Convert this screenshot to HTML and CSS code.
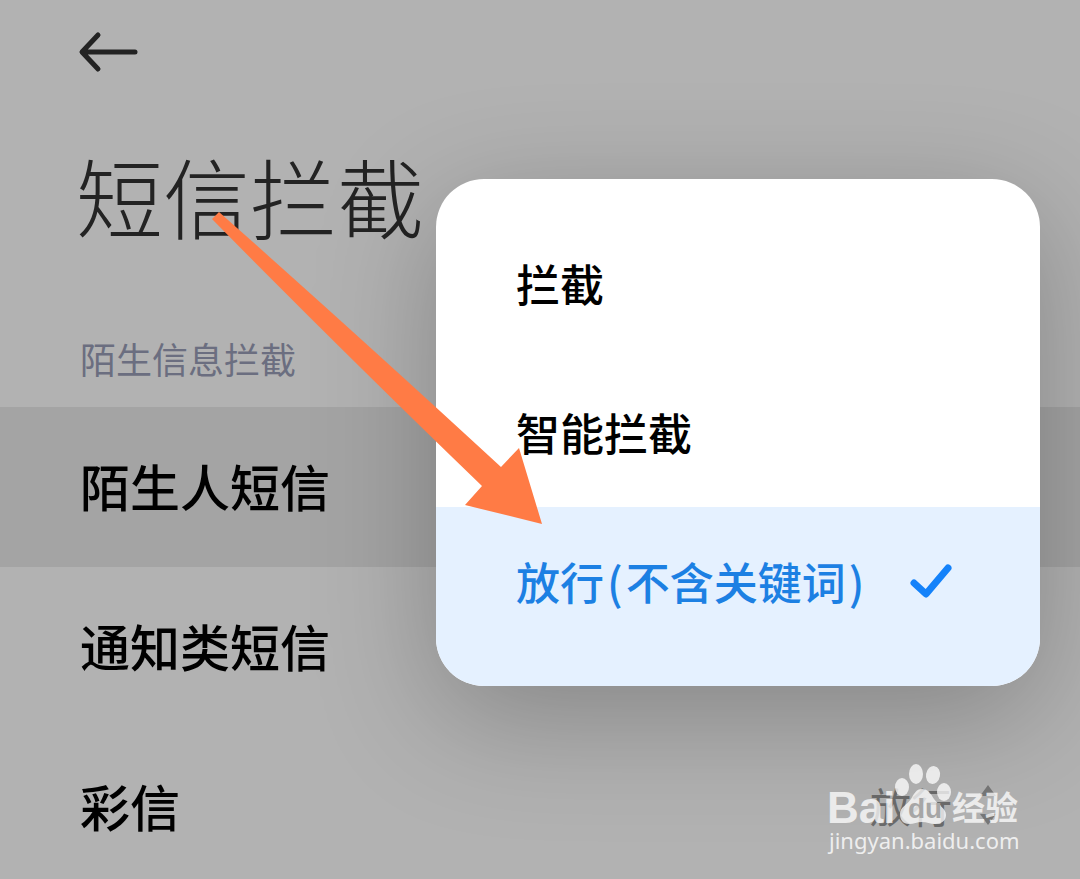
FILE: index.html
```
<!DOCTYPE html>
<html lang="zh-CN">
<head>
    <meta charset="UTF-8">
    <meta name="viewport" content="width=device-width, initial-scale=1.0">
    <title>短信拦截</title>
    <link rel="stylesheet" href="styles.css">
</head>
<body>

    <header>
        <button class="back" aria-label="返回">
            <svg width="60" height="42" viewBox="0 0 60 42">
                <path d="M20 4 L4 21 L20 38 M5 21 H57"></path>
            </svg>
        </button>
        <h1>短信拦截</h1>
    </header>

    <main>
        <h2>陌生信息拦截</h2>
        <div class="settings">
            <button class="row active">陌生人短信</button>
            <button class="row">通知类短信</button>
            <button class="row">彩信
                <span class="value">放行
                    <svg width="20" height="42" viewBox="0 0 20 42">
                        <path d="M10 1 L18 12 H2 Z M10 41 L2 30 H18 Z"></path>
                    </svg>
                </span>
            </button>
        </div>
    </main>

    <div class="menu">
        <button class="option">拦截</button>
        <button class="option">智能拦截</button>
        <button class="option selected">
            <span>放行<span class="paren">(</span>不含关键词<span class="paren">)</span></span>
            <svg width="42" height="36" viewBox="0 0 42 36">
                <path d="M4 20 L16 31 L38 5"></path>
            </svg>
        </button>
    </div>

    <!-- Pointer arrow -->
    <svg class="pointer" width="330" height="320" viewBox="0 0 330 320">
        <path d="M9 2 L2 9 Q126 135 272 276 L255 295 L332 314 L309 238 L291 257 Q140 118 9 2 Z"></path>
    </svg>

    <!-- Watermark -->
    <svg class="watermark" width="200" height="100" viewBox="0 0 200 100">
        <g class="brand">
            <text class="bai" x="0" y="65">Bai</text>
            <ellipse cx="75" cy="29" rx="7" ry="9"></ellipse>
            <ellipse cx="89" cy="16" rx="7" ry="10"></ellipse>
            <ellipse cx="106" cy="17" rx="7" ry="9" transform="rotate(10 106 17)"></ellipse>
            <ellipse cx="117" cy="34" rx="7" ry="9"></ellipse>
            <path d="M95 31 C101 31 104 36 107 41 C111 47 119 50 119 57 C119 63 114 66 108 66 C103 66 100 64 95 64 C90 64 87 66 82 66 C76 66 73 62 73 56 C73 49 80 47 84 41 C87 36 89 31 95 31 Z"></path>
            <text class="jingyan" x="125" y="62">经验</text>
        </g>
        <text class="du" x="81" y="60">du</text>
        <text class="site" x="2" y="91">jingyan.baidu.com</text>
    </svg>

</body>
</html>
```

FILE: styles.css
```
* {
    box-sizing: border-box;
}

body {
    position: relative;
    min-height: 100vh;
    margin: 0;
    overflow: hidden;
    background-color: #b2b2b2;
    color: #000;
    font-family: 'Noto Sans CJK SC', sans-serif;
}

button {
    border: none;
    background: none;
    color: inherit;
    font-family: inherit;
    text-align: left;
    cursor: pointer;
}

svg {
    display: block;
    flex: none;
}

header {
    padding: 31px 76px 0;
}

.back {
    display: block;
    padding: 0 2px;
}

.back path {
    fill: none;
    stroke: #232323;
    stroke-width: 5;
    stroke-linecap: round;
    stroke-linejoin: round;
}

h1 {
    margin: 58px 0 0;
    color: #232323;
    font-size: 87px;
    font-weight: 300;
    line-height: 128px;
}

h2 {
    margin: 0;
    padding: 72px 80px 22px;
    color: #6b6e80;
    font-size: 36px;
    font-weight: 400;
    line-height: 54px;
}

.row {
    display: flex;
    align-items: center;
    justify-content: space-between;
    width: 100%;
    height: 160px;
    padding: 0 82px 4px 80px;
    font-size: 50px;
    font-weight: 500;
}

.row.active {
    background-color: #a4a4a4;
}

.value {
    display: flex;
    align-items: center;
    gap: 26px;
    color: #6b6b6b;
    font-size: 41px;
    font-weight: 400;
}

.value path {
    fill: #777;
}

.menu {
    position: absolute;
    top: 179px;
    right: 40px;
    width: 604px;
    padding-top: 30px;
    overflow: hidden;
    border-radius: 48px;
    background-color: #fff;
    box-shadow: 0 30px 120px rgba(0, 0, 0, 0.25);
}

.option {
    display: flex;
    align-items: center;
    justify-content: space-between;
    width: 100%;
    height: 149px;
    padding: 0 88px 2px 80px;
    font-size: 44px;
    font-weight: 500;
}

.option.selected {
    height: 179px;
    padding-bottom: 32px;
    background-color: #e5f1ff;
    color: #1c80e3;
}

.option path {
    fill: none;
    stroke: #1482fa;
    stroke-width: 7;
    stroke-linecap: round;
    stroke-linejoin: round;
}

.paren {
    padding: 0 3px;
}

.pointer {
    position: absolute;
    top: 210px;
    left: 210px;
    overflow: visible;
    fill: #ff7b45;
}

.watermark {
    position: absolute;
    top: 758px;
    right: 53px;
    overflow: visible;
}

.brand {
    fill: #fff;
    opacity: 0.75;
}

.bai,
.du {
    font-family: 'Liberation Sans', sans-serif;
    font-weight: bold;
}

.bai {
    font-size: 44px;
}

.du {
    fill: #a6a6a6;
    font-size: 28px;
}

.jingyan {
    font-size: 33px;
    font-weight: 700;
}

.site {
    fill: #fff;
    fill-opacity: 0.8;
    font-family: 'Noto Sans', sans-serif;
    font-size: 22px;
}
```
